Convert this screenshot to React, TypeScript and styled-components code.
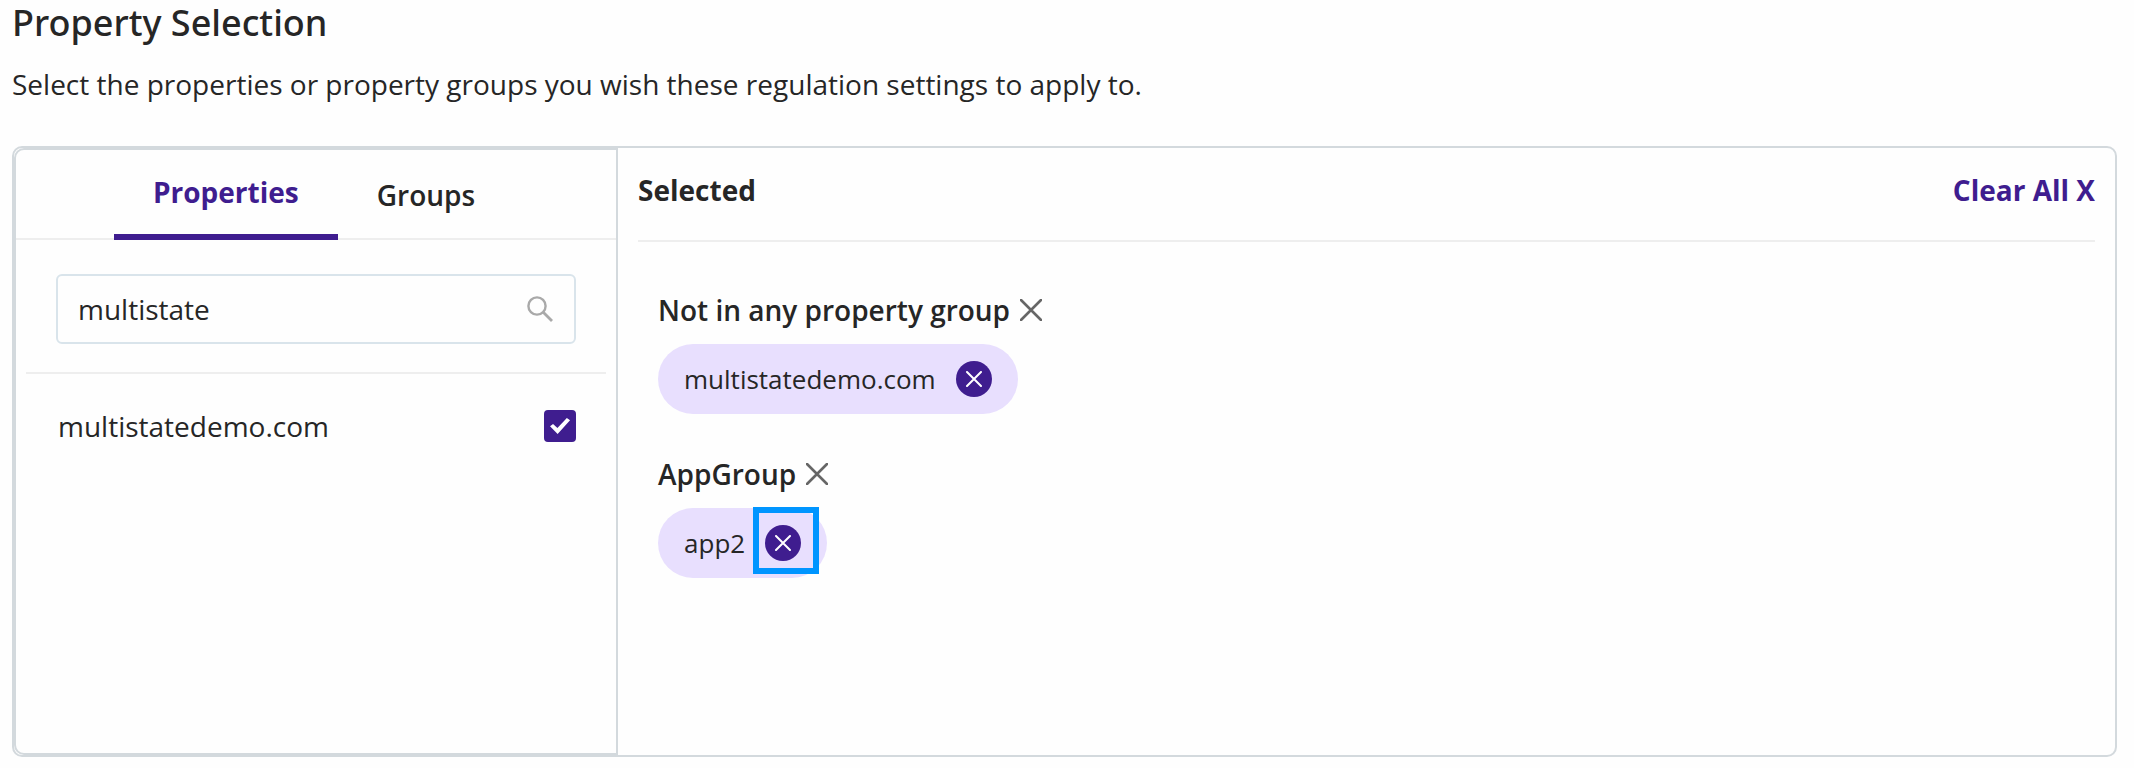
import React, { useState } from "react";
import styled, { createGlobalStyle } from "styled-components";

const purple = "#3f1d8f";
const ink = "#262626";
const frame = "#d3d9dd";
const rule = "#eeeeee";

const GlobalStyle = createGlobalStyle`
  *, *::before, *::after { box-sizing: border-box; }
  body {
    margin: 0;
    background: #fefefe;
    color: ${ink};
    font-family: "Open Sans", "Noto Sans", sans-serif;
    font-size: 28px;
    line-height: 38px;
  }
  button, input { font: inherit; color: inherit; }
  button { padding: 0; border: 0; background: none; cursor: pointer; }
  h1, h2, h3, p, ul { margin: 0; padding: 0; }
`;

const Page = styled.main`
  padding: 0 17px 11px 12px;
`;

const Title = styled.h1`
  font-family: "Noto Sans", "Open Sans", sans-serif;
  font-size: 36px;
  line-height: 46px;
  font-weight: 500;
`;

const Intro = styled.p`
  margin: 19px 0 43px;
`;

const Picker = styled.section`
  display: grid;
  grid-template-columns: 23fr 57fr;
  min-height: 611px;
  border: 2px solid ${frame};
  border-radius: 10px;
`;

const Sidebar = styled.div`
  border: 2px solid ${frame};
  border-radius: 10px 0 0 10px;
`;

const TabList = styled.div`
  display: flex;
  justify-content: center;
  height: 90px;
  padding-right: 4px;
  box-shadow: inset 0 -2px ${rule};
`;

const Tab = styled.button<{ $active: boolean }>`
  padding: 0 39px;
  font-weight: ${(p) => (p.$active ? 700 : 600)};
  color: ${(p) => (p.$active ? purple : ink)};
  border-bottom: ${(p) => (p.$active ? `6px solid ${purple}` : "0")};
`;

const SearchArea = styled.div`
  margin: 0 10px;
  padding: 34px 30px 28px;
  border-bottom: 2px solid ${rule};
`;

const SearchBox = styled.label`
  display: flex;
  align-items: center;
  height: 70px;
  padding: 0 21px 0 20px;
  border: 2px solid #d9e4eb;
  border-radius: 6px;
`;

const SearchInput = styled.input`
  flex: 1;
  min-width: 0;
  height: 38px;
  padding: 0;
  border: 0;
  outline: 0;
  background: none;
`;

const PropertyList = styled.ul`
  list-style: none;
  padding: 33px 40px 33px 42px;
`;

const PropertyRow = styled.label`
  display: flex;
  align-items: center;
  justify-content: space-between;
`;

const Checkbox = styled.input`
  appearance: none;
  display: grid;
  place-items: center;
  width: 32px;
  height: 32px;
  margin: 0;
  border: 2px solid ${purple};
  border-radius: 4px;

  &:checked { background: ${purple}; }

  &:checked::before {
    content: "";
    width: 20px;
    height: 16px;
    background: #fff;
    clip-path: polygon(0 52%, 15% 37%, 37% 62%, 84% 0, 100% 14%, 38% 100%);
  }
`;

const Selection = styled.div`
  padding: 0 20px;
`;

const SelectionHeader = styled.header`
  display: flex;
  justify-content: space-between;
  padding: 23px 0 31px;
  border-bottom: 2px solid ${rule};
`;

const SelectionTitle = styled.h2`
  font-size: 28px;
  font-weight: 700;
`;

const ClearAll = styled.button`
  font-weight: 700;
  color: ${purple};
`;

const Groups = styled.div`
  display: grid;
  gap: 41px;
  padding: 49px 20px;
`;

const GroupHeading = styled.div`
  display: flex;
  align-items: center;
  gap: 10px;
  margin-bottom: 15px;
`;

const GroupName = styled.h3`
  font-size: 28px;
  font-weight: 600;
`;

const IconButton = styled.button`
  display: flex;
`;

const Chip = styled.div`
  display: inline-flex;
  align-items: center;
  gap: 20px;
  height: 70px;
  padding: 0 26px;
  border-radius: 35px;
  background: #e8dffe;
  font-size: 26px;
  vertical-align: top;
`;

const RemoveButton = styled.button<{ $highlighted?: boolean }>`
  position: relative;
  display: grid;
  place-items: center;
  width: 36px;
  height: 36px;
  border-radius: 50%;
  background: ${purple};

  &::after {
    content: "";
    display: ${(p) => (p.$highlighted ? "block" : "none")};
    position: absolute;
    inset: -18px -18px -13px -12px;
    border: 6px solid #0095ff;
  }
`;

const Cross = ({ size, color, stroke }: { size: number; color: string; stroke: number }) => (
  <svg width={size} height={size} viewBox={`0 0 ${size} ${size}`} aria-hidden="true">
    <path
      d={`M1 1 L${size - 1} ${size - 1} M${size - 1} 1 L1 ${size - 1}`}
      stroke={color}
      strokeWidth={stroke}
      strokeLinecap="round"
    />
  </svg>
);

const SearchIcon = () => (
  <svg width="26" height="26" viewBox="0 0 26 26" fill="none" stroke="#a9a9a9" aria-hidden="true">
    <circle cx="10" cy="10" r="8.6" strokeWidth="2.4" />
    <path d="M16 16 L25 25" strokeWidth="2.8" />
  </svg>
);

const selectedGroups = [
  { name: "Not in any property group", items: ["multistatedemo.com"] },
  { name: "AppGroup", items: ["app2"] },
];

export default function App() {
  const [tab, setTab] = useState("Properties");
  const [query, setQuery] = useState("multistate");
  const [checked, setChecked] = useState(true);

  return (
    <>
      <GlobalStyle />
      <Page>
        <Title>Property Selection</Title>
        <Intro>Select the properties or property groups you wish these regulation settings to apply to.</Intro>
        <Picker>
          <Sidebar>
            <TabList role="tablist">
              {["Properties", "Groups"].map((name) => (
                <Tab
                  key={name}
                  type="button"
                  role="tab"
                  aria-selected={tab === name}
                  $active={tab === name}
                  onClick={() => setTab(name)}
                >
                  {name}
                </Tab>
              ))}
            </TabList>
            <SearchArea>
              <SearchBox>
                <SearchInput
                  type="text"
                  aria-label="Search properties"
                  value={query}
                  onChange={(e) => setQuery(e.target.value)}
                />
                <SearchIcon />
              </SearchBox>
            </SearchArea>
            <PropertyList>
              <li>
                <PropertyRow>
                  multistatedemo.com
                  <Checkbox type="checkbox" checked={checked} onChange={(e) => setChecked(e.target.checked)} />
                </PropertyRow>
              </li>
            </PropertyList>
          </Sidebar>
          <Selection>
            <SelectionHeader>
              <SelectionTitle>Selected</SelectionTitle>
              <ClearAll type="button">Clear All X</ClearAll>
            </SelectionHeader>
            <Groups>
              {selectedGroups.map((group) => (
                <section key={group.name}>
                  <GroupHeading>
                    <GroupName>{group.name}</GroupName>
                    <IconButton type="button" aria-label={`Remove ${group.name}`}>
                      <Cross size={22} color="#666666" stroke={2.6} />
                    </IconButton>
                  </GroupHeading>
                  {group.items.map((item) => (
                    <Chip key={item}>
                      {item}
                      <RemoveButton type="button" aria-label={`Remove ${item}`} $highlighted={item === "app2"}>
                        <Cross size={16} color="#ffffff" stroke={2} />
                      </RemoveButton>
                    </Chip>
                  ))}
                </section>
              ))}
            </Groups>
          </Selection>
        </Picker>
      </Page>
    </>
  );
}
